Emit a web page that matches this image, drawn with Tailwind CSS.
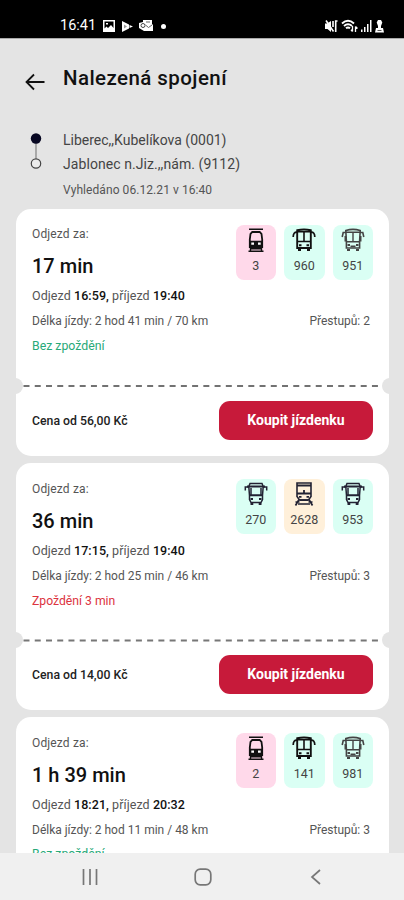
<!DOCTYPE html>
<html lang="cs">
<head>
    <meta charset="UTF-8">
    <meta name="viewport" content="width=device-width, initial-scale=1.0">
    <title>Nalezená spojení</title>
    <script src="https://cdn.jsdelivr.net/npm/@tailwindcss/browser@4"></script>
</head>
<body class="bg-[#e4e4e4] font-['Roboto',sans-serif] text-[#555] h-[900px] overflow-hidden flex flex-col">

    <!-- Vehicle icons -->
    <svg class="hidden">
        <symbol id="tram" viewBox="0 0 24 24">
            <path d="M5 1.200h14" stroke="currentColor" stroke-width="1.600"/>
            <path d="M8.300 4h7.400l1.800 2 .700 5.500V19H5.800v-7.500L6.500 6z" fill="none" stroke="currentColor" stroke-width="1.800"/>
            <path d="M5.500 12.800h13V19h-13z" fill="currentColor"/>
            <path d="M7.300 14.600h2.700v2.200H7.300zM14 14.600h2.700v2.200H14z" fill="#fff"/>
            <path d="M6 20.800h12M4.500 23.200h15M6.500 19v4M17.500 19v4" stroke="currentColor" stroke-width="1.400"/>
        </symbol>
        <symbol id="bus" viewBox="0 0 24 24">
            <path d="M5.200 2.300Q12 .800 18.800 2.300V20H5.200z" fill="none" stroke="currentColor" stroke-width="1.900"/>
            <path d="M5 3.800h14M12 4v9.500M5 13.500h14" stroke="currentColor" stroke-width="1.600"/>
            <path d="M5 4.200Q1.300 4 1.200 9M19 4.200q3.700-.200 3.800 4.800" fill="none" stroke="currentColor" stroke-width="1.700"/>
            <path d="M7 17.200h2.500M14.500 17.200h2.500M6 22h3M15 22h3" stroke="currentColor" stroke-width="2"/>
        </symbol>
        <symbol id="coach" viewBox="0 0 24 24">
            <path d="M4.800 2.500Q12 .300 19.200 2.500l-.600 11v6.500H5.400v-6.500z" fill="none" stroke="currentColor" stroke-width="1.600"/>
            <path d="M4.800 4.300h14.400M12 4.500v9M5 13.800h14" fill="none" stroke="currentColor" stroke-width="1.400"/>
            <path d="M5 4.500H2.200L1.200 9M19 4.500h2.800l1 4.500M4.300 8v5.500M19.700 8v5.500" fill="none" stroke="currentColor" stroke-width="1.600"/>
            <path d="M6.500 17h2.500M15 17h2.500M9.500 18.300h5M6 22h3M15 22h3" stroke="currentColor" stroke-width="1.800"/>
        </symbol>
        <symbol id="van" viewBox="0 0 24 24">
            <path d="M6 1.500h12l1.200 3-.700 9v4l-1.500 3H7l-1.500-3v-4l-.700-9z" fill="none" stroke="currentColor" stroke-width="1.500"/>
            <path d="M3 4.500h18M6 13.300h12" stroke="currentColor" stroke-width="1.900"/>
            <path d="M5 5H1.300v3.500M19 5h3.700v3.500M7 6v7M17 6v7" fill="none" stroke="currentColor" stroke-width="1.500"/>
            <path d="M6.500 17h2.500M15 17h2.500M6.500 22h2.800M14.700 22h2.800" stroke="currentColor" stroke-width="1.800"/>
        </symbol>
        <symbol id="train" viewBox="0 0 24 24">
            <path d="M5 1h14v13.500L16.500 18h-9L5 14.500z" fill="none" stroke="currentColor" stroke-width="1.600"/>
            <path d="M5 3.500h14M5 11.500h14M12 8v4" stroke="currentColor" stroke-width="1.800"/>
            <path d="M7 14.800h2.500M14.500 14.800H17M8 18.200h8" stroke="currentColor" stroke-width="1.700"/>
            <path d="M7 17.500l-3.500 6M17 17.500l3.500 6M3.500 20h4M16.500 20h4M6 22h12" stroke="currentColor" stroke-width="1.700"/>
        </symbol>
    </svg>

    <!-- Status bar -->
    <div class="bg-black text-white h-[38px] shrink-0 flex items-end justify-between pl-[60px] pr-[20px] pb-[4px]">
        <div class="flex items-center gap-[7px] h-[16px]">
            <span class="text-[14.500px] w-[36px] leading-4 whitespace-nowrap">16:41</span>
            <svg class="w-[12px] h-[12px]" viewBox="0 0 12 12"><path fill-rule="evenodd" fill="currentColor" d="M0 0h12v12H0zM1.500 1.500v7l2-2 1.500 1.500L8 5l2.500 3V1.500zM3 3h2v1.500H3z"/></svg>
            <svg class="w-[11px] h-[11px]" viewBox="0 0 11 11"><path fill="currentColor" d="M0 0l7 3.500v4L0 11zM7.500 4L11 5.500 7.500 7z"/><path d="M2 3.500l3 2-3 2z" fill="#999"/></svg>
            <svg class="w-[14px] h-[12px] -ml-[1px]" viewBox="0 0 14 12"><path fill="currentColor" d="M4 0h9v4l1 1v6H5L0 8V3l4-1z"/><circle cx="4" cy="5.500" r="2" fill="none" stroke="#444" stroke-width="1"/><path d="M6.500 5l3 2.500L13 5M7 2h4" fill="none" stroke="#666" stroke-width="1"/></svg>
            <span class="w-[5px] h-[5px] rounded-full bg-white ml-[1px]"></span>
        </div>
        <div class="flex items-center gap-[3px] h-[16px]">
            <svg class="w-[13px] h-[13px]" viewBox="0 0 13 13"><path fill="currentColor" d="M0 3.500h2L6 1v11L2.500 9H0z"/><path d="M1 .500l7.500 11M8 1v6" fill="none" stroke="currentColor" stroke-width="1.600"/><path d="M12.500 1h-1.800v11" fill="none" stroke="currentColor" stroke-width="1.600"/></svg>
            <svg class="w-[17px] h-[14px]" viewBox="0 0 17 14" fill="none" stroke="currentColor"><path d="M1 4.500q6-5.500 12 0M3 7q4-3.500 8 0M5 9.300q2-1.600 4 0" stroke-width="1.900"/><path d="M11.500 7v5.500M10 10.800l1.500 1.700M14.500 13V7.500M14.500 7.500L16.500 9.500" stroke-width="1.300"/></svg>
            <svg class="w-[11px] h-[12px]" viewBox="0 0 11 12" fill="currentColor"><path d="M0 9.500h1.500V12H0zM3 7h1.500v5H3zM6 4h1.500v8H6zM9 0h1.500v12H9z"/></svg>
            <svg class="w-[9px] h-[13px]" viewBox="0 0 9 13"><path fill="currentColor" d="M3 0h3l1.300 2.500L6 6v2h2l1 4.500H0L1 8h2V6L1.700 2.500z"/><path d="M2.500 10.500h4" stroke="#555"/></svg>
        </div>
    </div>
    <div class="h-px shrink-0 bg-[#aaa]"></div>

    <!-- Header -->
    <header class="h-[170px] shrink-0 pl-[25px] pt-[26px] text-[#333]">
        <div class="flex items-center h-[26px]">
            <svg class="w-[20px] h-[18px] mt-[7px] mr-[18px] text-[#111]" viewBox="0 0 20 18" fill="none" stroke="currentColor" stroke-width="1.800"><path d="M19.500 9H2M9 1.500L1.500 9 9 16.500"/></svg>
            <h1 class="text-[20.500px] font-medium text-[#111] tracking-[0.430px] whitespace-nowrap">Nalezená spojení</h1>
        </div>
        <div class="flex mt-[37px]">
            <svg class="w-[22px] h-[48px] mr-[16px] shrink-0" viewBox="0 0 22 48"><path d="M11 10v21" stroke="#888" stroke-width="1.300"/><circle cx="11" cy="10.500" r="5.200" fill="#070722"/><circle cx="11" cy="35.500" r="4.700" fill="#ececec" stroke="#444" stroke-width="1.200"/></svg>
            <div class="whitespace-nowrap">
                <p class="text-[14px] leading-[24px] text-[#444]">Liberec,,Kubelíkova (0001)</p>
                <p class="text-[14px] leading-[24px] tracking-[0.070px] text-[#444]">Jablonec n.Jiz.,,nám. (9112)</p>
                <p class="text-[12px] leading-[20px] tracking-[0.070px] mt-[4px] text-[#555]">Vyhledáno 06.12.21 v 16:40</p>
            </div>
        </div>
    </header>

    <!-- Connections -->
    <main class="flex-1 min-h-0 overflow-hidden pl-[16px] pr-[15px] flex flex-col gap-[7px] text-[12px] whitespace-nowrap">

        <article class="bg-white rounded-[15px] h-[247px] shrink-0 overflow-hidden relative">
            <div class="px-4 pt-4 h-[176px]">
                <div class="flex justify-between h-[63px]">
                    <div>
                        <p class="leading-[18px] tracking-[0.150px]">Odjezd za:</p>
                        <h2 class="text-[20px] leading-[28px] mt-[9px] font-medium text-[#111]">17 min</h2>
                    </div>
                    <div class="flex gap-[8px] text-[12.500px] text-[#444]">
                        <div class="w-[40.500px] h-[55px] rounded-[8px] bg-[#ffd9ea] flex flex-col items-center pt-[3px]"><svg class="w-6 h-6 text-[#111]"><use href="#tram"/></svg><span class="leading-[18px] mt-[5px]">3</span></div>
                        <div class="w-[40.500px] h-[55px] rounded-[8px] bg-[#dafff4] flex flex-col items-center pt-[3px]"><svg class="w-6 h-6 text-[#111]"><use href="#bus"/></svg><span class="leading-[18px] mt-[5px]">960</span></div>
                        <div class="w-[40.500px] h-[55px] rounded-[8px] bg-[#dafff4] flex flex-col items-center pt-[3px]"><svg class="w-6 h-6 text-[#444]"><use href="#coach"/></svg><span class="leading-[18px] mt-[5px]">951</span></div>
                    </div>
                </div>
                <p class="leading-[16px] text-[12.500px] tracking-[0.070px]">Odjezd <b class="font-medium text-[#111]">16:59,</b> příjezd <b class="font-medium text-[#111]">19:40</b></p>
                <div class="flex justify-between leading-[16px] mt-[9px]"><p>Délka jízdy: 2 hod 41 min / 70 km</p><p class="pr-[3px]">Přestupů: 2</p></div>
                <p class="leading-[16px] mt-[9px] text-[12.300px] text-[#28a978]">Bez zpoždění</p>
            </div>
            <svg class="absolute left-0 top-[169px] w-full h-[16px]" viewBox="0 0 373 16"><circle cx="-1" cy="8" r="8" fill="#e4e4e4"/><circle cx="374" cy="8" r="8" fill="#e4e4e4"/><path d="M7.500 8h356" stroke="#444" stroke-width="1.700" stroke-dasharray="6 5.240"/></svg>
            <div class="flex items-center justify-between px-4 h-[70px]">
                <p class="text-[12.250px] font-medium text-[#222] pt-[2px]">Cena od 56,00 Kč</p>
                <button class="w-[154px] h-[39px] rounded-[11px] bg-[#c71a3a] text-white text-[14px] font-bold">Koupit jízdenku</button>
            </div>
        </article>

        <article class="bg-white rounded-[15px] h-[247px] shrink-0 overflow-hidden relative">
            <div class="px-4 pt-4 h-[176px]">
                <div class="flex justify-between h-[64px]">
                    <div>
                        <p class="leading-[18px] tracking-[0.150px] mt-px">Odjezd za:</p>
                        <h2 class="text-[20px] leading-[28px] mt-[9px] font-medium text-[#111]">36 min</h2>
                    </div>
                    <div class="flex gap-[8px] text-[12.500px] text-[#444]">
                        <div class="w-[40.500px] h-[55px] rounded-[8px] bg-[#dafff4] flex flex-col items-center pt-[3px]"><svg class="w-6 h-6 text-[#222233]"><use href="#van"/></svg><span class="leading-[18px] mt-[5px]">270</span></div>
                        <div class="w-[40.500px] h-[55px] rounded-[8px] bg-[#fff0da] flex flex-col items-center pt-[3px]"><svg class="w-6 h-6 text-[#222233]"><use href="#train"/></svg><span class="leading-[18px] mt-[5px]">2628</span></div>
                        <div class="w-[40.500px] h-[55px] rounded-[8px] bg-[#dafff4] flex flex-col items-center pt-[3px]"><svg class="w-6 h-6 text-[#222233]"><use href="#van"/></svg><span class="leading-[18px] mt-[5px]">953</span></div>
                    </div>
                </div>
                <p class="leading-[16px] text-[12.500px] tracking-[0.070px]">Odjezd <b class="font-medium text-[#111]">17:15,</b> příjezd <b class="font-medium text-[#111]">19:40</b></p>
                <div class="flex justify-between leading-[16px] mt-[9px]"><p>Délka jízdy: 2 hod 25 min / 46 km</p><p class="pr-[3px]">Přestupů: 3</p></div>
                <p class="leading-[16px] mt-[9px] text-[12.200px] text-[#dc3340]">Zpoždění 3 min</p>
            </div>
            <svg class="absolute left-0 top-[169px] w-full h-[16px]" viewBox="0 0 373 16"><circle cx="-1" cy="8" r="8" fill="#e4e4e4"/><circle cx="374" cy="8" r="8" fill="#e4e4e4"/><path d="M7.500 8.500h356" stroke="#777" stroke-width="2" stroke-dasharray="6 5.240"/></svg>
            <div class="flex items-center justify-between px-4 h-[70px]">
                <p class="text-[12.250px] font-medium text-[#222] pt-[2px]">Cena od 14,00 Kč</p>
                <button class="w-[154px] h-[39px] rounded-[11px] bg-[#c71a3a] text-white text-[14px] font-bold">Koupit jízdenku</button>
            </div>
        </article>

        <article class="bg-white rounded-[15px] h-[247px] shrink-0 overflow-hidden relative">
            <div class="px-4 pt-4 h-[176px]">
                <div class="flex justify-between h-[64px]">
                    <div>
                        <p class="leading-[18px] tracking-[0.150px] mt-px">Odjezd za:</p>
                        <h2 class="text-[20px] leading-[28px] mt-[9px] font-medium text-[#111]">1 h 39 min</h2>
                    </div>
                    <div class="flex gap-[8px] text-[12.500px] text-[#444]">
                        <div class="w-[40.500px] h-[55px] rounded-[8px] bg-[#ffd9ea] flex flex-col items-center pt-[3px]"><svg class="w-6 h-6 text-[#111]"><use href="#tram"/></svg><span class="leading-[18px] mt-[5px]">2</span></div>
                        <div class="w-[40.500px] h-[55px] rounded-[8px] bg-[#dafff4] flex flex-col items-center pt-[3px]"><svg class="w-6 h-6 text-[#111]"><use href="#bus"/></svg><span class="leading-[18px] mt-[5px]">141</span></div>
                        <div class="w-[40.500px] h-[55px] rounded-[8px] bg-[#dafff4] flex flex-col items-center pt-[3px]"><svg class="w-6 h-6 text-[#444]"><use href="#coach"/></svg><span class="leading-[18px] mt-[5px]">981</span></div>
                    </div>
                </div>
                <p class="leading-[16px] text-[12.500px] tracking-[0.070px]">Odjezd <b class="font-medium text-[#111]">18:21,</b> příjezd <b class="font-medium text-[#111]">20:32</b></p>
                <div class="flex justify-between leading-[16px] mt-[9px]"><p>Délka jízdy: 2 hod 11 min / 48 km</p><p class="pr-[3px]">Přestupů: 3</p></div>
                <p class="leading-[16px] mt-[8px] text-[12.300px] text-[#28a978]">Bez zpoždění</p>
            </div>
        </article>
    </main>

    <!-- System navigation -->
    <nav class="bg-[#f0f0f0] h-[47px] shrink-0 flex items-center pl-[82px] text-[#777]">
        <svg class="w-4 h-4" viewBox="0 0 16 16" stroke="currentColor" stroke-width="1.700"><path d="M1.500 0v16M8 0v16M14.500 0v16"/></svg>
        <svg class="w-[18px] h-[18px] ml-[96px]" viewBox="0 0 18 18" fill="none" stroke="currentColor" stroke-width="1.700"><rect x="1.200" y="1.200" width="15.600" height="15.600" rx="5"/></svg>
        <svg class="w-[12px] h-[16px] ml-[98px]" viewBox="0 0 12 16" fill="none" stroke="currentColor" stroke-width="1.700"><path d="M10 1L2 8l8 7"/></svg>
    </nav>
</body>
</html>
